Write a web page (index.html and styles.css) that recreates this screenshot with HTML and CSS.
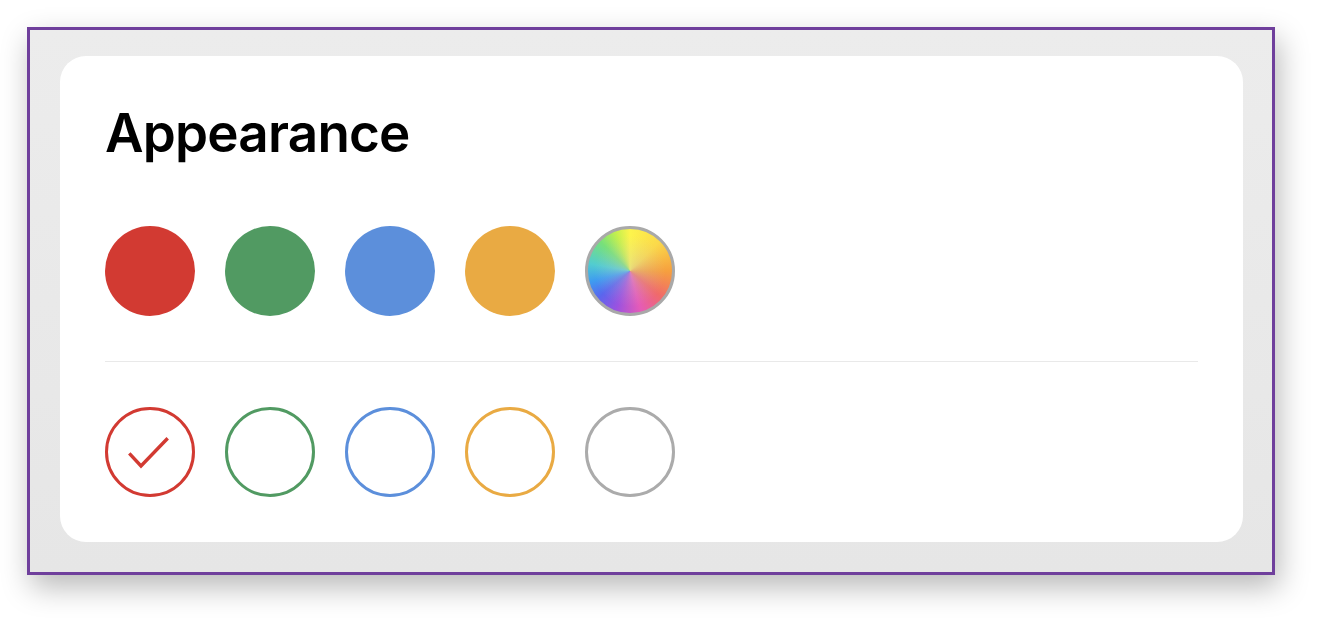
FILE: index.html
```html
<!DOCTYPE html>
<html lang="en">
<head>
<meta charset="utf-8">
<title>Appearance</title>
<link rel="stylesheet" href="styles.css">
</head>
<body>
<div class="frame">
  <section class="card">
    <h1 class="title">Appearance</h1>
    <div class="swatches">
      <span class="dot dot-red"></span>
      <span class="dot dot-green"></span>
      <span class="dot dot-blue"></span>
      <span class="dot dot-orange"></span>
      <span class="dot dot-rainbow"></span>
    </div>
    <hr class="divider">
    <div class="swatches">
      <span class="ring ring-red">
        <svg class="check" viewBox="0 0 90 90" width="90" height="90"><path d="M24.3 46.3 L36 59 L62.7 31.3" fill="none" stroke="#d23a32" stroke-width="3.4"/></svg>
      </span>
      <span class="ring ring-green"></span>
      <span class="ring ring-blue"></span>
      <span class="ring ring-orange"></span>
      <span class="ring ring-grey"></span>
    </div>
  </section>
</div>
</body>
</html>
```
FILE: styles.css
```css
html, body {
  margin: 0;
  background: #ffffff;
}
html {
  min-height: 618px;
}
body {
  box-sizing: border-box;
  min-height: 618px;
  padding: 27px;
  font-family: Inter, "Noto Sans", "Liberation Sans", sans-serif;
}
.frame {
  box-sizing: border-box;
  width: 1248px;
  height: 548px;
  border: 3px solid #6f3f9c;
  background: linear-gradient(#ececec, #e6e6e6);
  padding: 26px 29px 29px 30px;
  box-shadow: 4px 12px 28px rgba(0, 0, 0, 0.28);
}
.card {
  box-sizing: border-box;
  height: 486px;
  background: #ffffff;
  border-radius: 26px;
  padding: 50px 45px 45px;
}
.title {
  margin: 0 0 66px;
  font-size: 53px;
  line-height: 54px;
  font-weight: 600;
  color: #000;
  letter-spacing: -0.8px;
}
.swatches {
  display: flex;
  gap: 30px;
}
.dot, .ring {
  box-sizing: border-box;
  width: 90px;
  height: 90px;
  border-radius: 50%;
  display: block;
  position: relative;
}
.dot-red { background: #d23a32; }
.dot-green { background: #519a62; }
.dot-blue { background: #5c8fdb; }
.dot-orange { background: #e9aa43; }
.dot-rainbow {
  border: 3px solid #a9a9a9;
  background:
    radial-gradient(circle, rgba(200,200,200,0.4) 0%, rgba(255,255,255,0) 60%),
    conic-gradient(from 0deg, #fdf44c 0deg, #fbd94a 45deg, #f6a03e 90deg, #f06a6a 130deg, #e55bb8 165deg, #9a52e0 200deg, #5a66ee 230deg, #3e9cf0 255deg, #52ccd0 280deg, #78e07a 315deg, #c4f04e 340deg, #fdf44c 360deg);
}
.divider {
  margin: 45px 0;
  border: 0;
  height: 1px;
  background: #e9e9e9;
}
.ring { border: 3px solid; background: #fff; }
.ring-red { border-color: #d23a32; }
.ring-green { border-color: #519a62; }
.ring-blue { border-color: #5c8fdb; }
.ring-orange { border-color: #e9aa43; }
.ring-grey { border-color: #ababab; }
.check {
  position: absolute;
  left: -3px;
  top: -3px;
}
```
